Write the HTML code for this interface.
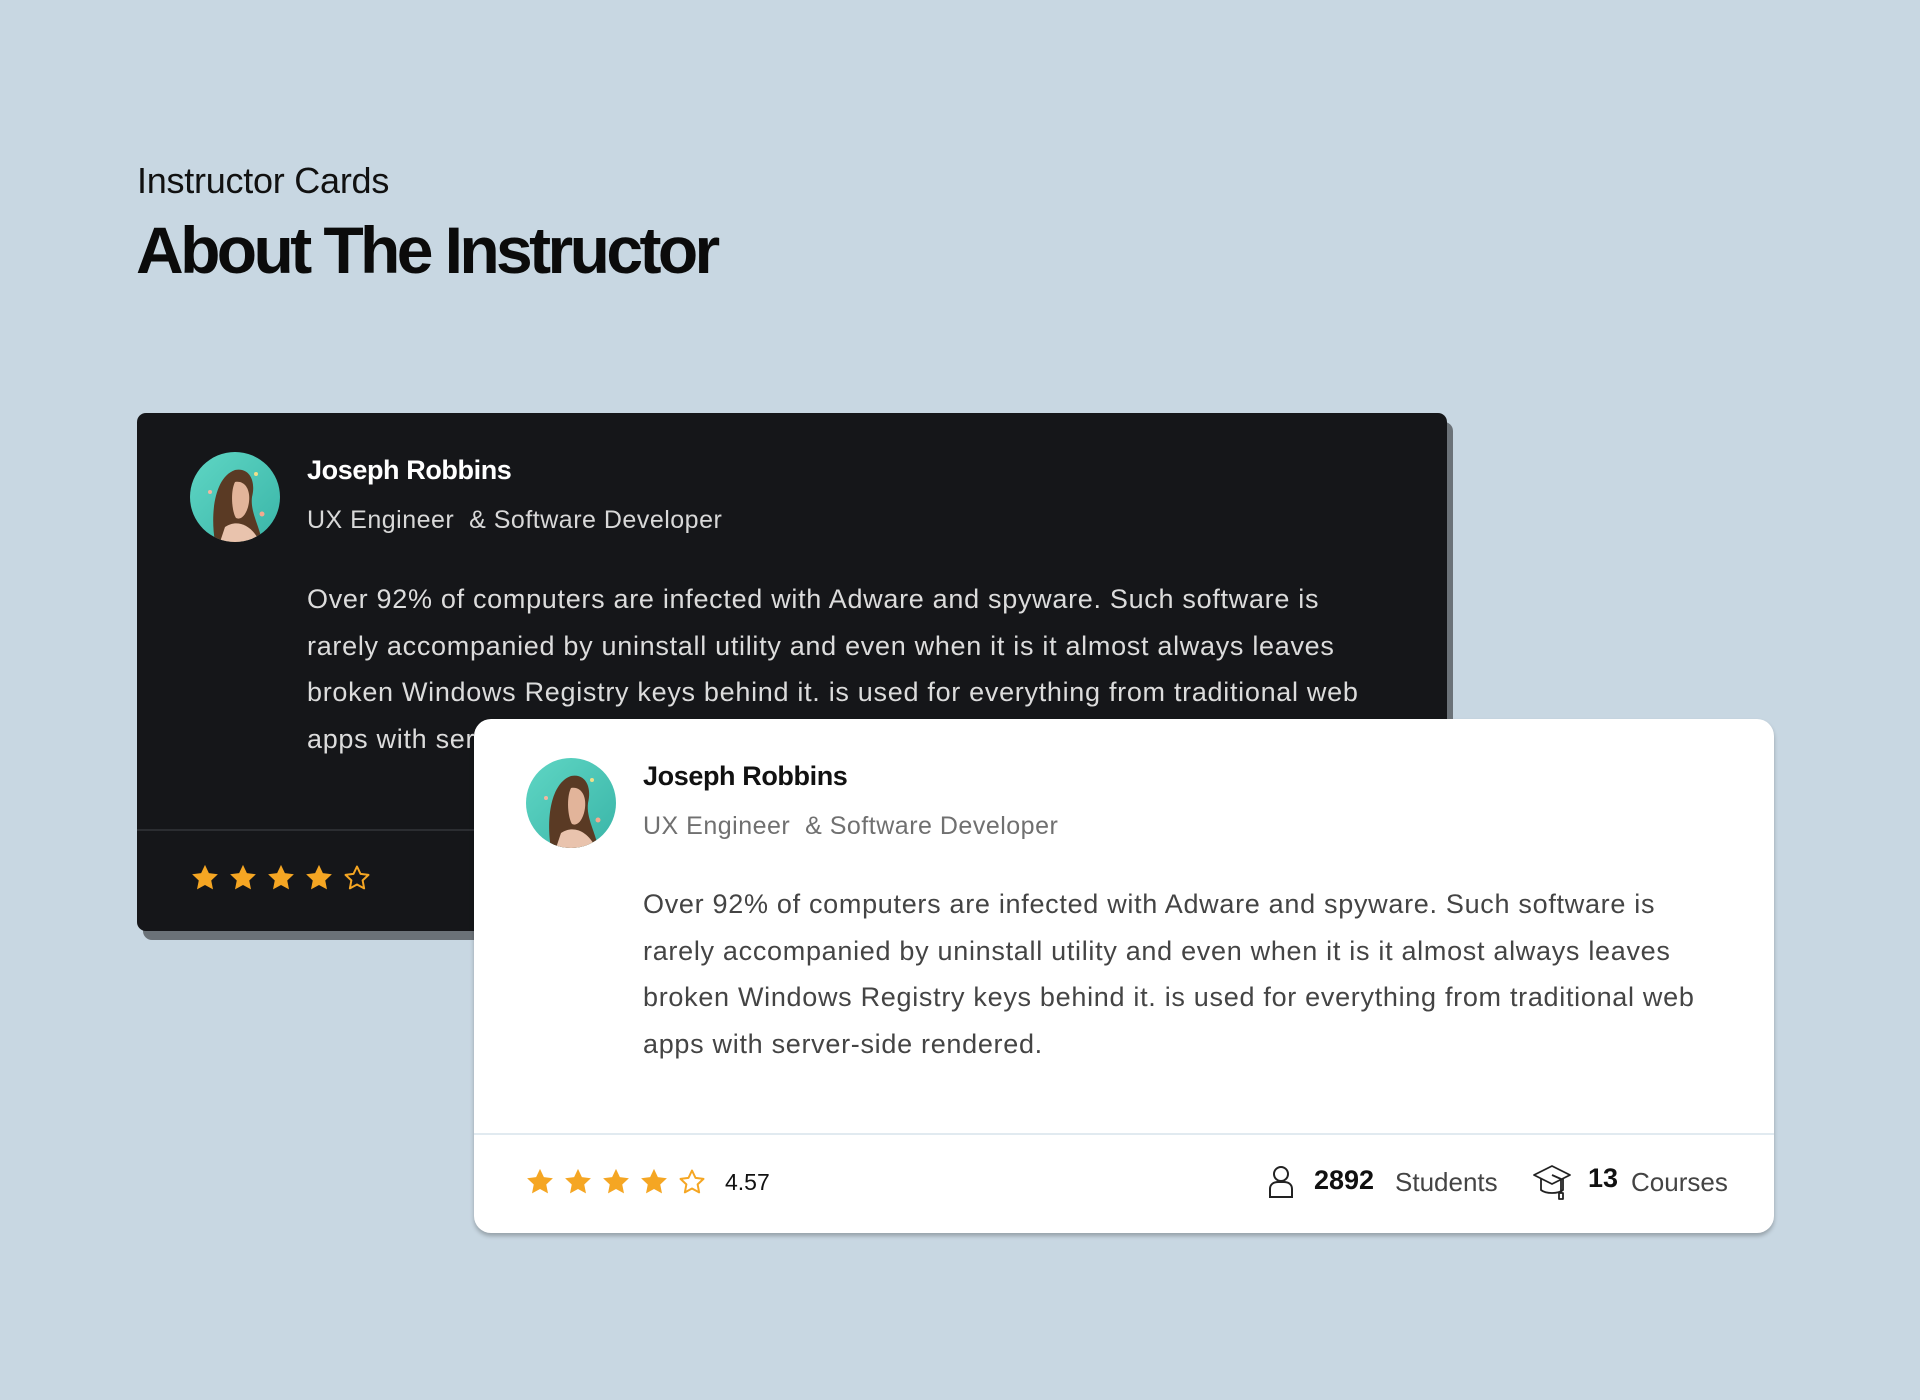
<!DOCTYPE html>
<html><head><meta charset="utf-8"><style>
*{margin:0;padding:0;box-sizing:border-box}
body{width:1920px;height:1400px;background:#c8d7e2;font-family:"Liberation Sans",sans-serif;position:relative;overflow:hidden}
.abs{position:absolute;white-space:nowrap}
.h1{left:137px;top:160px;font-size:36px;color:#111;letter-spacing:-0.25px}
.h2{left:136px;top:212px;font-size:66px;font-weight:bold;color:#0b0b0b;letter-spacing:-3.6px}
.dark{left:137px;top:413px;width:1310px;height:518px;background:#151619;border-radius:9px;box-shadow:6px 9px 0 #6b7278}
.white{left:474px;top:719px;width:1300px;height:514px;background:#fff;border-radius:17px;box-shadow:0 3px 4px rgba(0,0,0,.25)}
.name{font-size:27px;font-weight:bold;letter-spacing:-0.4px}
.sub{font-size:25px;letter-spacing:0.5px}
.p{font-size:27px;line-height:46.5px;letter-spacing:0.7px}
.star{position:absolute;width:30px;height:30px}
</style></head><body>
<div class="abs h1">Instructor Cards</div>
<div class="abs h2">About The Instructor</div>

<svg width="0" height="0" style="position:absolute"><defs>
<symbol id="av" viewBox="0 0 90 90">
<defs><linearGradient id="g" x1="0" y1="0" x2="1" y2="1"><stop offset="0" stop-color="#5fd6c4"/><stop offset="1" stop-color="#3ab5a8"/></linearGradient>
<clipPath id="c"><circle cx="45" cy="45" r="45"/></clipPath></defs>
<g clip-path="url(#c)"><rect width="90" height="90" fill="url(#g)"/>
<path d="M25 90 C20 60 25 25 45 18 C60 15 66 30 62 45 C60 60 70 75 72 90Z" fill="#5a3a24"/>
<path d="M45 30 C56 28 62 40 58 55 C55 65 50 68 46 66 C42 60 40 40 45 30Z" fill="#e2b49a"/>
<path d="M35 75 C45 68 60 70 70 90 L30 90Z" fill="#e9c3ad"/>
<circle cx="20" cy="40" r="2" fill="#f3b6a0"/><circle cx="72" cy="62" r="2.5" fill="#f5a98f"/><circle cx="66" cy="22" r="2" fill="#f0e08a"/></g>
</symbol>
<symbol id="sf" viewBox="0 0 24 24"><path d="M12 1.5l3.1 6.6 7.2.9-5.3 5 1.4 7.1L12 17.6 5.6 21.1 7 14l-5.3-5 7.2-.9z" fill="#f5a623"/></symbol>
<symbol id="so" viewBox="0 0 24 24"><path d="M12 2.8l2.8 5.9 6.4.8-4.7 4.4 1.2 6.4L12 17.2l-5.7 3.1 1.2-6.4-4.7-4.4 6.4-.8z" fill="none" stroke="#f5a623" stroke-width="1.6" stroke-linejoin="round"/></symbol>
</defs></svg>

<div class="abs dark">
<svg class="abs" style="left:53px;top:39px" width="90" height="90"><use href="#av"/></svg>
<div class="abs name" style="left:170px;top:42px;color:#fff">Joseph Robbins</div>
<div class="abs sub" style="left:170px;top:93px;color:#d8d8d8">UX Engineer &nbsp;&amp; Software Developer</div>
<div class="abs p" style="left:170px;top:163px;color:#dcdcdc">Over 92% of computers are infected with Adware and spyware. Such software is<br>rarely accompanied by uninstall utility and even when it is it almost always leaves<br>broken Windows Registry keys behind it. is used for everything from traditional web<br>apps with server-side rendered.</div>
<div class="abs" style="left:0;top:416px;width:1310px;height:2px;background:#2b2d31"></div>
<svg class="star" style="left:53px;top:450px"><use href="#sf"/></svg>
<svg class="star" style="left:91px;top:450px"><use href="#sf"/></svg>
<svg class="star" style="left:129px;top:450px"><use href="#sf"/></svg>
<svg class="star" style="left:167px;top:450px"><use href="#sf"/></svg>
<svg class="star" style="left:205px;top:450px"><use href="#so"/></svg>
</div>

<div class="abs white">
<svg class="abs" style="left:52px;top:39px" width="90" height="90"><use href="#av"/></svg>
<div class="abs name" style="left:169px;top:42px;color:#111">Joseph Robbins</div>
<div class="abs sub" style="left:169px;top:93px;color:#707070">UX Engineer &nbsp;&amp; Software Developer</div>
<div class="abs p" style="left:169px;top:162px;color:#444">Over 92% of computers are infected with Adware and spyware. Such software is<br>rarely accompanied by uninstall utility and even when it is it almost always leaves<br>broken Windows Registry keys behind it. is used for everything from traditional web<br>apps with server-side rendered.</div>
<div class="abs" style="left:0;top:414px;width:1300px;height:2px;background:#e1eaf0"></div>
<svg class="star" style="left:51px;top:448px"><use href="#sf"/></svg>
<svg class="star" style="left:89px;top:448px"><use href="#sf"/></svg>
<svg class="star" style="left:127px;top:448px"><use href="#sf"/></svg>
<svg class="star" style="left:165px;top:448px"><use href="#sf"/></svg>
<svg class="star" style="left:203px;top:448px"><use href="#so"/></svg>
<div class="abs" style="left:251px;top:450px;font-size:23px;color:#111">4.57</div>
<svg class="abs" style="left:793px;top:446px" width="28" height="34" viewBox="0 0 28 34" fill="none" stroke="#222" stroke-width="2"><circle cx="14" cy="9" r="7"/><path d="M3 32 V24 C3 19 7 17 11 17 H17 C21 17 25 19 25 24 V32 Z"/></svg>
<div class="abs" style="left:840px;top:446px;font-size:27px;font-weight:bold;color:#111">2892</div>
<div class="abs" style="left:921px;top:448px;font-size:26px;color:#444">Students</div>
<svg class="abs" style="left:1058px;top:444px" width="40" height="42" viewBox="0 0 40 42" fill="none" stroke="#222" stroke-width="1.8" stroke-linejoin="round"><path d="M2 12 L20 3 L38 12 L20 21 Z"/><path d="M9 16 V27 C14 31 26 31 31 27 V16"/><path d="M20 12 L29 16 V30"/><path d="M27 30 h4 v6 h-4z"/></svg>
<div class="abs" style="left:1114px;top:444px;font-size:27px;font-weight:bold;color:#111">13</div>
<div class="abs" style="left:1157px;top:448px;font-size:26px;color:#444">Courses</div>
</div>
</body></html>
